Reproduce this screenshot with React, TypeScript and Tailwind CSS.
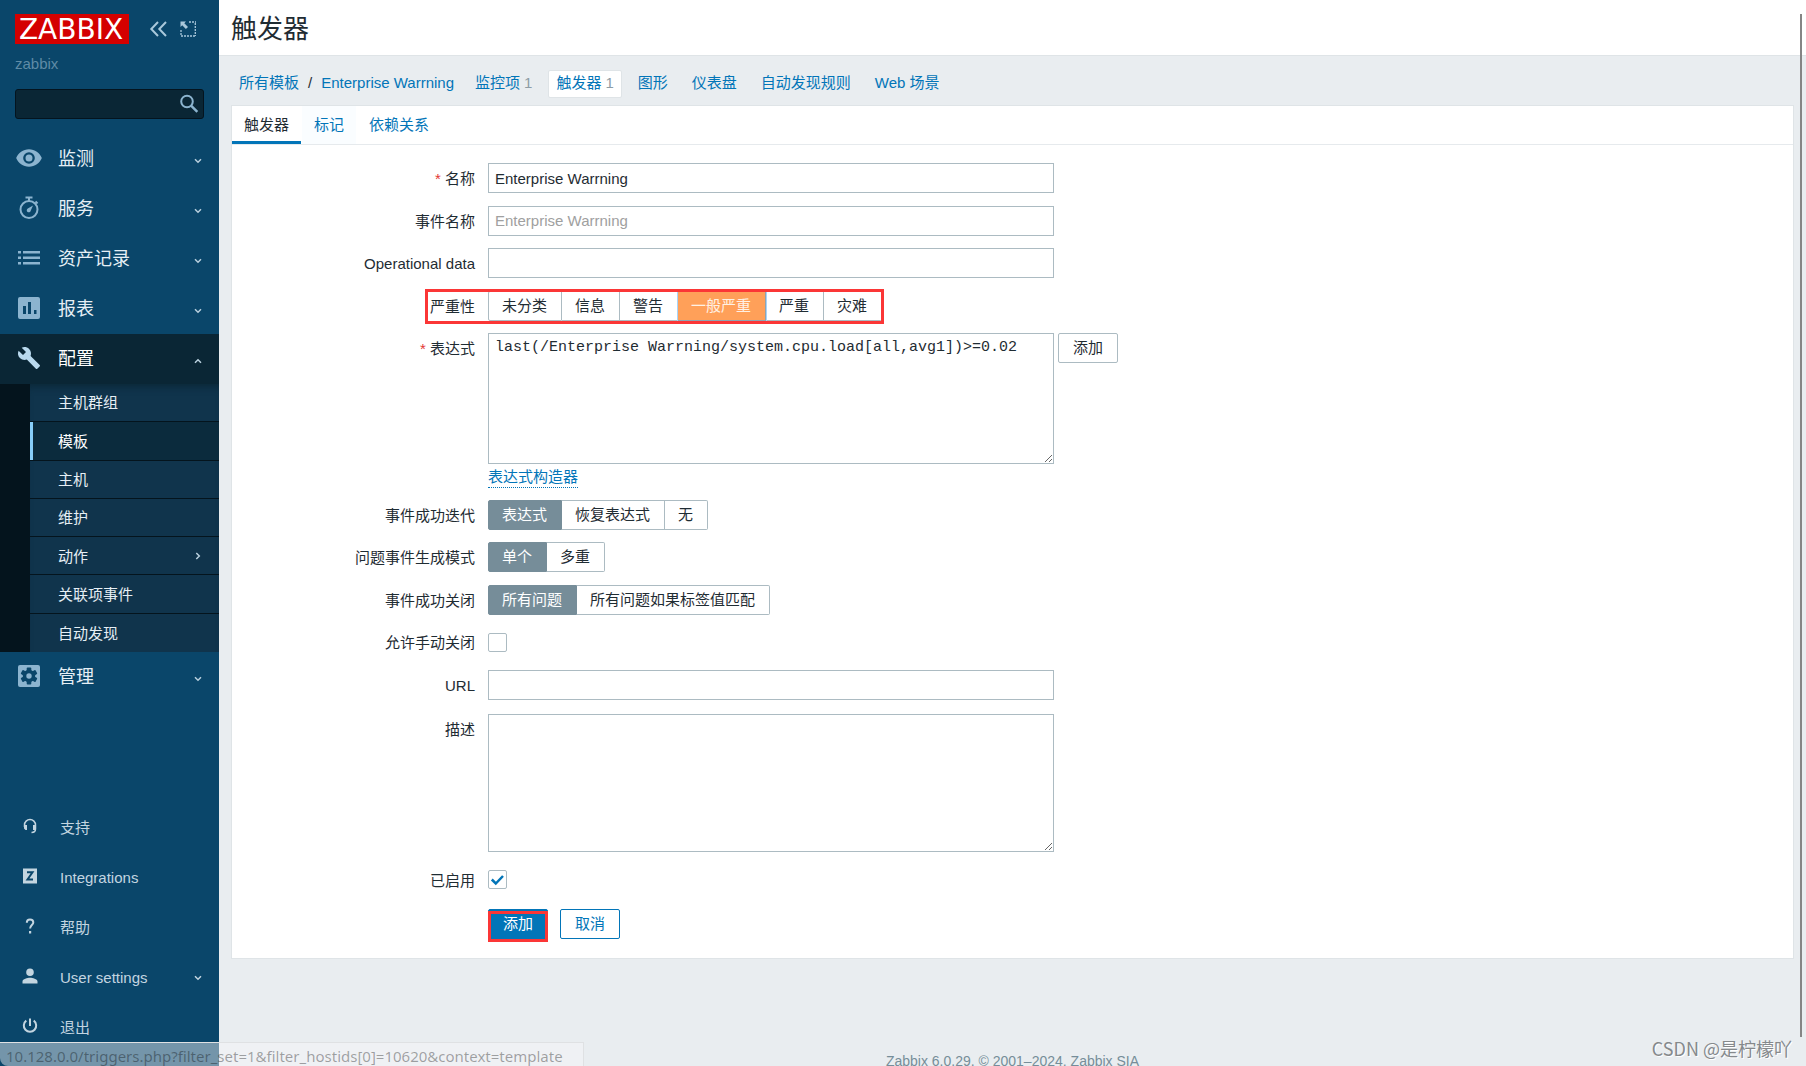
import { useState } from 'react'
import type { ReactNode } from 'react'

const ICONS: Record<string, string> = {
  eye: 'M12 4.5C7 4.5 2.7 7.6 1 12c1.700 4.400 6 7.500 11 7.500s9.300-3.100 11-7.500c-1.700-4.400-6-7.500-11-7.500zM12 17a5 5 0 1 1 0-10 5 5 0 0 1 0 10zm0-8a3 3 0 1 0 0 6 3 3 0 0 0 0-6z',
  list: 'M1 5h3v2.500H1zM6 5h17v2.500H6zM1 10.500h3V13H1zM6 10.500h17V13H6zM1 16h3v2.500H1zM6 16h17v2.500H6z',
  chart: 'M3 1h18a2 2 0 0 1 2 2v18a2 2 0 0 1-2 2H3a2 2 0 0 1-2-2V3a2 2 0 0 1 2-2zm3 9v8h3v-8zm5-4v12h3V6zm6 8v4h2.500v-4z',
  wrench: 'M22.700 19l-9.100-9.100c.9-2.300.4-5-1.500-6.900-2-2-5-2.400-7.400-1.300L9 6 6 9 1.600 4.700C.4 7.100.9 10.100 2.900 12.100c1.900 1.900 4.600 2.400 6.900 1.500l9.100 9.100c.4.4 1 .4 1.400 0l2.300-2.300c.5-.4.5-1.100.1-1.400z',
}

const FONT = "font-['Liberation_Sans','Noto_Sans_CJK_SC',sans-serif]"

function Glyph({ name }: { name: string }) {
  if (name === 'timer') {
    return (
      <svg viewBox="0 0 24 24" className="size-6" fill="none" stroke="currentColor">
        <circle cx="12" cy="13.500" r="8.500" strokeWidth="2" />
        <path d="M8.500 1.500h7M12 2v3M18.500 5.500l2 2" strokeWidth="2" />
        <path d="M16 9.500l-2.300 5.300a2 2 0 1 1-2.900-2.200z" fill="currentColor" stroke="none" />
      </svg>
    )
  }
  if (name === 'gear') {
    return (
      <svg viewBox="0 0 24 24" className="size-6">
        <rect x="1" y="1" width="22" height="22" rx="2" fill="currentColor" />
        <g fill="#0a466a">
          <circle cx="12" cy="12" r="6.200" />
          <rect x="9.700" y="3.500" width="4.600" height="17" rx="1" />
          <rect x="9.700" y="3.500" width="4.600" height="17" rx="1" transform="rotate(60 12 12)" />
          <rect x="9.700" y="3.500" width="4.600" height="17" rx="1" transform="rotate(120 12 12)" />
        </g>
        <circle cx="12" cy="12" r="2.700" fill="currentColor" />
      </svg>
    )
  }
  return (
    <svg viewBox="0 0 24 24" className={name === 'eye' ? 'size-7' : 'size-6'} fill="currentColor" fillRule="evenodd">
      <path d={ICONS[name]} />
    </svg>
  )
}

function Chevron({ turn = '' }: { turn?: string }) {
  return (
    <svg viewBox="0 0 8 8" className={`size-2 ${turn}`} fill="none" stroke="currentColor" strokeWidth="1.500">
      <path d="M1 2.300l3 3 3-3" />
    </svg>
  )
}

function MenuItem({ icon, label, open }: { icon: string; label: string; open?: boolean }) {
  return (
    <a
      href="#"
      className={`flex h-[50px] items-center pr-[17px] pl-[15px] text-[18px] ${open ? 'bg-[#0a2635] text-white' : 'text-[#e6eff5]'}`}
    >
      <span className={`flex w-[43px] pb-[2px] ${open ? 'text-[#b9d9ee]' : 'text-[#8cb4cf]'}`}>
        <span className="flex w-7 justify-center">
          <Glyph name={icon} />
        </span>
      </span>
      <span className="flex-1 pt-px">{label}</span>
      <span className="pt-1 text-[#b9d0de]">
        <Chevron turn={open ? 'rotate-180' : ''} />
      </span>
    </a>
  )
}

const SUBMENU = ['主机群组', '模板', '主机', '维护', '动作', '关联项事件', '自动发现']

function FooterIcon({ name }: { name: string }) {
  return (
    <svg viewBox="0 0 16 16" className="size-4" fill="none" stroke="currentColor" strokeWidth="2">
      {name === 'support' && (
        <>
          <path d="M2.500 9V7a5.500 5.500 0 0 1 11 0v4c0 2-1.500 3.500-4 3.500" strokeWidth="1.500" />
          <path d="M2 7h3v5H3.500L2 10.500zM11 7h3v4l-1 1h-2z" fill="currentColor" stroke="none" />
        </>
      )}
      {name === 'integrations' && (
        <>
          <rect x="1" y="0.500" width="14" height="15" fill="currentColor" stroke="none" />
          <path d="M5 4.300h5.500L5.500 11.500H11" stroke="#0a466a" />
        </>
      )}
      {name === 'help' && (
        <>
          <path d="M4.800 4.800C4.800 2.500 6 1.500 8 1.500s3.300 1.100 3.300 3c0 2.500-3.200 2.700-3.200 6" />
          <path d="M7 13h2.200v2.500H7z" fill="currentColor" stroke="none" />
        </>
      )}
      {name === 'user' && (
        <path
          d="M8 0.500a3.800 3.800 0 1 1 0 7.600 3.800 3.800 0 0 1 0-7.600zM0.500 15.500v-2C0.500 11 5.500 9.800 8 9.800s7.500 1.200 7.500 3.700v2z"
          fill="currentColor"
          stroke="none"
        />
      )}
      {name === 'power' && <path d="M8 0.500v7.500M4.300 2.600a6.200 6.200 0 1 0 7.400 0" />}
    </svg>
  )
}

const FOOTER_MENU = [
  { icon: 'support', label: '支持' },
  { icon: 'integrations', label: 'Integrations' },
  { icon: 'help', label: '帮助' },
  { icon: 'user', label: 'User settings', arrow: true },
  { icon: 'power', label: '退出' },
]

function Sidebar() {
  return (
    <aside className="flex w-[219px] shrink-0 flex-col bg-[#0a466a]">
      <div className="flex items-center pt-[14px] pl-[15px]">
        <a
          href="#"
          className="flex h-[30px] w-[114px] items-center justify-center bg-[#d40000] pt-px pr-[2px] font-['DejaVu_Sans',sans-serif] text-[28px] leading-[30px] text-white"
        >
          ZABBIX
        </a>
        <button type="button" aria-label="Collapse sidebar" className="ml-5 text-[#a9c8db]">
          <svg viewBox="0 0 18 16" className="h-4 w-[18px]" fill="none" stroke="currentColor" strokeWidth="2">
            <path d="M9 1L2.300 8 9 15M17 1l-6.700 7 6.700 7" />
          </svg>
        </button>
        <button type="button" aria-label="Hide sidebar" className="ml-[13px] text-[#a9c8db]">
          <svg viewBox="0 0 16 16" className="size-4" fill="none" stroke="currentColor">
            <path d="M9 1h7M15.300 2v13M15 15H1M1 14V9" strokeDasharray="2 1" strokeWidth="1.300" />
            <path d="M0.500 0.500h5.500L4.300 2.200 8 5.900 5.900 8 2.200 4.300 0.500 6z" fill="currentColor" stroke="none" />
          </svg>
        </button>
      </div>
      <div className="mt-[10px] pl-[15px] text-[15px] leading-5 text-[#5f8ba6]">zabbix</div>
      <form className="relative mx-[15px] mt-[15px]" onSubmit={(e) => e.preventDefault()}>
        <input
          aria-label="Search"
          className="block h-[30px] w-full rounded-[3px] border border-[#04141f] bg-[#0a2635] pr-9 pl-2 text-[15px] text-white outline-none"
        />
        <button type="submit" aria-label="Search" className="absolute top-[5px] right-[5px] text-[#8cb4cf]">
          <svg viewBox="0 0 20 20" className="size-5" fill="none" stroke="currentColor">
            <circle cx="8" cy="7.500" r="5.800" strokeWidth="2" />
            <path d="M12.300 11.800l6 6" strokeWidth="2.500" />
          </svg>
        </button>
      </form>

      <nav className="mt-[15px]">
        <MenuItem icon="eye" label="监测" />
        <MenuItem icon="timer" label="服务" />
        <MenuItem icon="list" label="资产记录" />
        <MenuItem icon="chart" label="报表" />
        <MenuItem icon="wrench" label="配置" open />
        <ul className="grid min-h-[268px] auto-rows-fr border-l-[30px] border-[#04141d] bg-[#10344c] text-[15px] text-[#e6eff5] shadow-[inset_0_8px_8px_-6px_#0a2635]">
          {SUBMENU.map((item) => (
            <li key={item} className="flex border-b border-[#04141d] last:border-b-0">
              <a
                href="#"
                className={`flex flex-1 items-center border-l-[3px] pr-[17px] pl-[25px] ${item === '模板' ? 'border-[#87cefa] bg-[#0b2b3d] text-white' : 'border-transparent'}`}
              >
                <span className="flex-1 pt-[2px]">{item}</span>
                {item === '动作' && <Chevron turn="-rotate-90 text-[#b9d0de]" />}
              </a>
            </li>
          ))}
        </ul>
        <MenuItem icon="gear" label="管理" />
      </nav>

      <nav className="mt-auto pb-[13px]">
        {FOOTER_MENU.map((item) => (
          <a key={item.label} href="#" className="flex h-[50px] items-center pr-[17px] pl-[22px] text-[15px] text-[#c3d5e0]">
            <span className="w-[38px] pb-1">
              <FooterIcon name={item.icon} />
            </span>
            <span className="flex-1 pt-px">{item.label}</span>
            {item.arrow && <Chevron />}
          </a>
        ))}
      </nav>
    </aside>
  )
}

function Row({ label, id, required, children }: { label?: string; id?: string; required?: boolean; children: ReactNode }) {
  return (
    <div className="flex items-start">
      <div className="w-[243px] shrink-0 pt-px text-right leading-[30px]">
        {label && (
          <label htmlFor={id}>
            {required && <span className="text-[#e33734]">* </span>}
            {label}
          </label>
        )}
      </div>
      <div className="ml-[13px]">{children}</div>
    </div>
  )
}

const inputClass = 'block h-[30px] w-[566px] border border-[#acbbc2] bg-white px-[6px] outline-none placeholder:text-[#a0a0a0]'

function Segments({ name, options, initial, severity }: { name: string; options: string[]; initial: string; severity?: boolean }) {
  const [value, setValue] = useState(initial)
  const active = severity
    ? 'border-[#8fa3b0] bg-[#ffa059] text-[#fff1e4] shadow-[-1px_0_0_#a8d4f8,1px_0_0_#a8d4f8]'
    : 'border-[#768d99] bg-[#768d99] text-white'

  return (
    <div role="radiogroup" className="flex">
      {options.map((option) => (
        <label
          key={option}
          className={`flex h-[30px] cursor-pointer items-center border-y border-r pt-px pr-[14px] pl-[13px] first:rounded-l-xs first:border-l last:rounded-r-xs ${value === option ? 'relative z-10 ' + active : 'border-[#acbbc2] bg-white'}`}
        >
          <input
            type="radio"
            name={name}
            className="sr-only"
            checked={value === option}
            onChange={() => setValue(option)}
          />
          {option}
        </label>
      ))}
    </div>
  )
}

function Checkbox({ id, defaultChecked }: { id: string; defaultChecked?: boolean }) {
  return (
    <div className="flex h-[30px] items-center">
      <span className="relative flex">
        <input
          id={id}
          type="checkbox"
          defaultChecked={defaultChecked}
          className="peer size-[19px] appearance-none rounded-xs border border-[#acbbc2] bg-white"
        />
        <svg
          viewBox="0 0 19 19"
          className="pointer-events-none absolute inset-0 hidden size-[19px] peer-checked:block"
          fill="none"
          stroke="#0275b8"
          strokeWidth="2.500"
        >
          <path d="M3.800 9.500l4 4L15 6" />
        </svg>
      </span>
    </div>
  )
}

function TriggerForm() {
  return (
    <form className="pt-[18px] pb-[19px]" onSubmit={(e) => e.preventDefault()}>
      <div className="grid min-h-[170px] auto-rows-fr">
        <Row label="名称" id="name" required>
          <input id="name" defaultValue="Enterprise Warrning" className={inputClass} />
        </Row>
        <Row label="事件名称" id="event_name">
          <input id="event_name" placeholder="Enterprise Warrning" className={inputClass} />
        </Row>
        <Row label="Operational data" id="opdata">
          <input id="opdata" className={inputClass} />
        </Row>
        <Row label="严重性">
          <div className="relative">
            <Segments
              name="priority"
              options={['未分类', '信息', '警告', '一般严重', '严重', '灾难']}
              initial="一般严重"
              severity
            />
            <span className="pointer-events-none absolute -top-[2px] -right-[2px] -bottom-[3px] -left-[63px] z-20 border-[3px] border-[#fb3636]" />
          </div>
        </Row>
      </div>

      <Row label="表达式" id="expression" required>
        <div className="flex items-start gap-1">
          <textarea
            id="expression"
            defaultValue="last(/Enterprise Warrning/system.cpu.load[all,avg1])>=0.02"
            className="block h-[131px] w-[566px] border border-[#acbbc2] bg-white px-[6px] py-[5px] font-['Liberation_Mono',monospace] text-[15px] leading-[18px] outline-none"
          />
          <button type="button" className="h-[30px] rounded-xs border border-[#acbbc2] bg-white px-[14px] pt-px">
            添加
          </button>
        </div>
        <a href="#" className="mt-[3px] inline-block border-b border-dotted border-[#0275b8] leading-5 text-[#0275b8]">
          表达式构造器
        </a>
      </Row>

      <div className="mt-[11px] grid min-h-[170px] auto-rows-fr">
        <Row label="事件成功迭代">
          <Segments name="recovery_mode" options={['表达式', '恢复表达式', '无']} initial="表达式" />
        </Row>
        <Row label="问题事件生成模式">
          <Segments name="type" options={['单个', '多重']} initial="单个" />
        </Row>
        <Row label="事件成功关闭">
          <Segments name="correlation_mode" options={['所有问题', '所有问题如果标签值匹配']} initial="所有问题" />
        </Row>
        <Row label="允许手动关闭" id="manual_close">
          <Checkbox id="manual_close" />
        </Row>
      </div>

      <div className="grid gap-[13px]">
        <Row label="URL" id="url">
          <input id="url" className={inputClass} />
        </Row>
        <Row label="描述" id="description">
          <textarea id="description" className="block h-[138px] w-[566px] border border-[#acbbc2] bg-white px-[6px] py-[5px] outline-none" />
        </Row>
        <Row label="已启用" id="status">
          <Checkbox id="status" defaultChecked />
        </Row>
        <Row>
          <div className="flex gap-3">
            <span className="relative">
              <button type="submit" className="block h-[30px] rounded-xs border border-[#0275b8] bg-[#0275b8] px-[14px] pt-px text-white">
                添加
              </button>
              <span className="pointer-events-none absolute top-[2px] right-0 -bottom-[3px] left-0 border-[3px] border-[#fb3636]" />
            </span>
            <button type="button" className="h-[30px] rounded-xs border border-[#0275b8] bg-white px-[14px] pt-px text-[#0275b8]">
              取消
            </button>
          </div>
        </Row>
      </div>
    </form>
  )
}

const CRUMBS = [
  { label: '监控项', count: 1 },
  { label: '触发器', count: 1, active: true },
  { label: '图形' },
  { label: '仪表盘' },
  { label: '自动发现规则' },
  { label: 'Web 场景' },
]

export default function App() {
  return (
    <div className={`relative flex h-screen overflow-hidden bg-[#e9edf0] text-[15px] text-[#1f2c33] ${FONT}`}>
      <Sidebar />
      <main className="flex min-w-0 flex-1 flex-col">
        <header className="flex h-14 shrink-0 items-center border-b border-[#dfe4e7] bg-white px-3 pt-[2px]">
          <h1 className="text-[26px] leading-8">触发器</h1>
        </header>

        <nav className="flex h-[49px] shrink-0 items-center pt-[6px] pl-5 text-[#0275b8]">
          <a href="#">所有模板</a>
          <span className="px-[9px] text-[#1f2c33]">/</span>
          <a href="#">Enterprise Warrning</a>
          <div className="ml-[13px] flex gap-2">
            {CRUMBS.map((crumb) => (
              <a
                key={crumb.label}
                href="#"
                className={`flex h-[28px] items-center gap-1 rounded-xs border px-[7px] ${crumb.active ? 'border-[#dfe4e7] bg-white' : 'border-transparent'}`}
              >
                {crumb.label}
                {crumb.count && <span className="text-[#8d9ca5]">{crumb.count}</span>}
              </a>
            ))}
          </div>
        </nav>

        <section className="mx-3 border border-[#dfe4e7] bg-white">
          <div className="flex h-[39px] gap-px border-b border-[#e6eaed]">
            <a href="#" className="flex items-center border-b-[3px] border-[#0275b8] px-3 pt-[3px]">
              触发器
            </a>
            <a href="#" className="flex items-center bg-[#fafdff] px-3 text-[#0275b8]">
              标记
            </a>
            <a href="#" className="flex items-center px-3 text-[#0275b8]">
              依赖关系
            </a>
          </div>
          <TriggerForm />
        </section>

        <footer className="mt-auto -mb-1 text-center text-[14px] leading-[18px] text-[#768d99]">
          Zabbix 6.0.29. © 2001–2024,{' '}
          <a href="#" className="border-b border-dotted border-[#768d99]">
            Zabbix SIA
          </a>
        </footer>
      </main>

      {/* scrollbar thumb, link preview and watermark float over the page */}
      <div className="absolute top-[14px] right-1 bottom-[29px] w-[2px] bg-[#858585]" />
      <div className="absolute bottom-0 left-0 h-6 rounded-bl-lg border-t border-r border-[#dfe1e3] bg-[#f7f7f8]/45 pr-5 pl-[6px] font-['Noto_Sans',sans-serif] leading-[26px] text-black/35">
        10.128.0.0/triggers.php?filter_set=1&amp;filter_hostids[0]=10620&amp;context=template
      </div>
      <div className="absolute right-[14px] bottom-[6px] font-['Noto_Sans_CJK_SC',sans-serif] text-[18px] leading-6 text-[#85898c] [text-shadow:1px_1px_0_#ffffff]">
        CSDN @是柠檬吖
      </div>
    </div>
  )
}
